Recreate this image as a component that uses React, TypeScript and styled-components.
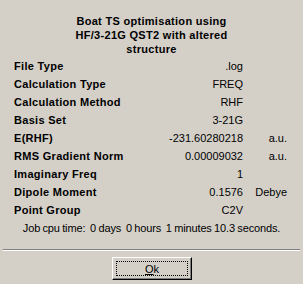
import { Fragment } from "react";
import { createGlobalStyle, styled } from "styled-components";

const GlobalStyle = createGlobalStyle`
	html, body {
		margin: 0;
		padding: 0;
		background: #d4d0c8;
	}
`;

const Dialog = styled.div`
	width: 303px;
	height: 284px;
	background: #d4d0c8;
	color: #000;
	font-family: "Liberation Sans", Arial, sans-serif;
	font-size: 11px;
	display: flex;
	flex-direction: column;
	overflow: hidden;
`;

const Title = styled.div`
	padding: 14px 20px 0;
	font-weight: bold;
	font-size: 11px;
	letter-spacing: 0.3px;
	line-height: 14px;
	text-align: center;
	margin-bottom: 1px;
`;

const Table = styled.div`
	display: grid;
	grid-template-columns: auto 1fr 44px;
	padding: 0 16px 0 14px;
	line-height: 18px;
`;

const Label = styled.div`
	font-weight: bold;
	letter-spacing: 0.3px;
`;

const Value = styled.div`
	text-align: right;
`;

const Unit = styled.div`
	text-align: right;
`;

const CpuTime = styled.div`
	text-align: center;
	line-height: 18px;
	white-space: pre;
	letter-spacing: -0.15px;
	word-spacing: -0.5px;
`;

const Separator = styled.div`
	margin: 12px 3px 0;
	height: 1px;
	background: #808080;
	border-bottom: 1px solid #ffffff;
`;

const ButtonRow = styled.div`
	display: flex;
	justify-content: center;
	padding-top: 6px;
`;

const Button = styled.button`
	width: 80px;
	height: 23px;
	margin-left: 1px;
	padding: 0;
	background: #d4d0c8;
	font-family: "Liberation Sans", Arial, sans-serif;
	font-size: 11px;
	color: #000;
	border: 1px solid;
	border-color: #ffffff #000000 #000000 #ffffff;
	box-shadow: inset -1px -1px 0 #808080;
	position: relative;

	&::after {
		content: "";
		position: absolute;
		inset: 3px;
		border: 1px dotted #000;
	}

	u {
		text-decoration: underline;
	}
`;

const rows: [string, string, string][] = [
	["File Type", ".log", ""],
	["Calculation Type", "FREQ", ""],
	["Calculation Method", "RHF", ""],
	["Basis Set", "3-21G", ""],
	["E(RHF)", "-231.60280218", "a.u."],
	["RMS Gradient Norm", "0.00009032", "a.u."],
	["Imaginary Freq", "1", ""],
	["Dipole Moment", "0.1576", "Debye"],
	["Point Group", "C2V", ""],
];

const App = () => {
	return (
		<>
			<GlobalStyle />
			<Dialog>
				<Title>
					Boat TS optimisation using
					<br />
					HF/3-21G QST2 with altered
					<br />
					structure
				</Title>
				<Table>
					{rows.map(([label, value, unit]) => (
						<Fragment key={label}>
							<Label>{label}</Label>
							<Value>{value}</Value>
							<Unit>{unit}</Unit>
						</Fragment>
					))}
				</Table>
				<CpuTime>Job cpu time:  0 days  0 hours  1 minutes 10.3 seconds.</CpuTime>
				<Separator />
				<ButtonRow>
					<Button>
						<u>O</u>k
					</Button>
				</ButtonRow>
			</Dialog>
		</>
	);
};

export default App;
